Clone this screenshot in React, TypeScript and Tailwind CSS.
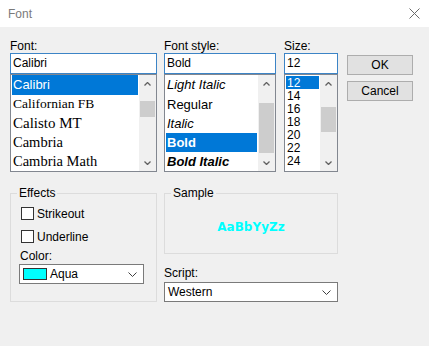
import React from "react";

const Chevron = ({ up }: { up?: boolean }) => (
  <svg width="7" height="4" viewBox="0 0 7 4" className="block">
    <path
      d={up ? "M0.5 3.5L3.5 0.5L6.5 3.5" : "M0.5 0.5L3.5 3.5L6.5 0.5"}
      fill="none"
      stroke="#606060"
      strokeWidth="1.3"
    />
  </svg>
);

const ComboArrow = () => (
  <svg width="9" height="5" viewBox="0 0 9 5" className="block">
    <path d="M0.5 0.5L4.5 4.5L8.5 0.5" fill="none" stroke="#404040" strokeWidth="1" />
  </svg>
);

// thumb classes are written out in full by the caller
const ScrollBar = ({ thumb }: { thumb: string }) => (
  <div className="flex w-[17px] flex-col bg-[#f0f0f0]">
    <div className="flex h-[17px] items-center justify-center">
      <Chevron up />
    </div>
    <div className="flex-1">
      <div className={`mx-[1px] bg-[#cdcdcd] ${thumb}`} />
    </div>
    <div className="flex h-[17px] items-center justify-center">
      <Chevron />
    </div>
  </div>
);

const Field = ({ label, value, width }: { label: string; value: string; width: string }) => (
  <>
    <div className="h-[14px] text-[12px] leading-[14px]">{label}</div>
    <div className={`h-[21px] ${width} border border-[#3c84c6] bg-white pl-[2px] text-[12px] leading-[19px]`}>
      {value}
    </div>
  </>
);

const Checkbox = ({ label }: { label: string }) => (
  <div className="ml-[2px] flex h-[23px] items-center gap-[3px]">
    <div className="h-[13px] w-[13px] border border-[#333333] bg-white" />
    <span className="text-[12px]">{label}</span>
  </div>
);

export default function App() {
  return (
    <div className="h-[346px] w-[429px] overflow-hidden bg-[#f0f0f0] font-['Liberation_Sans',Arial,sans-serif] text-black">
      {/* title bar */}
      <div className="flex h-[27px] items-center justify-between bg-white pl-[8px] pr-[9px]">
        <span className="text-[12px] text-[#7a7a7a]">Font</span>
        <svg width="11" height="11" viewBox="0 0 11 11" className="block">
          <path d="M0.5 0.5L10.5 10.5M10.5 0.5L0.5 10.5" stroke="#6a6a6a" strokeWidth="1" />
        </svg>
      </div>

      <div className="px-[10px] pt-[12px]">
        {/* top row */}
        <div className="flex">
          <div className="flex w-[147px] flex-col">
            <Field label="Font:" value="Calibri" width="w-[147px]" />
            <div className="flex h-[98px] border border-[#828790] bg-white">
              <div className="flex-1 px-[1px]">
                <div className="flex h-[20px] items-center bg-[#0078d7] pl-[1px] text-[13px] text-white">Calibri</div>
                <div className="flex h-[19px] items-center pl-[1px] font-['Liberation_Serif',serif] text-[13.5px]">Californian FB</div>
                <div className="flex h-[19px] items-center pl-[1px] font-['Liberation_Serif',serif] text-[15px]">Calisto MT</div>
                <div className="flex h-[19px] items-center pl-[1px] font-['Liberation_Serif',serif] text-[14.5px]">Cambria</div>
                <div className="flex h-[19px] items-center pl-[1px] font-['Liberation_Serif',serif] text-[14.5px]">Cambria Math</div>
              </div>
              <ScrollBar thumb="mt-[9px] h-[16px]" />
            </div>
          </div>

          <div className="ml-[7px] flex w-[112px] flex-col">
            <Field label="Font style:" value="Bold" width="w-[112px]" />
            <div className="flex h-[98px] border border-[#828790] bg-white">
              <div className="flex-1 px-[1px] text-[13px]">
                <div className="flex h-[20px] items-center pl-[1px] italic">Light Italic</div>
                <div className="flex h-[19px] items-center pl-[1px]">Regular</div>
                <div className="flex h-[19px] items-center pl-[1px] italic">Italic</div>
                <div className="flex h-[19px] items-center bg-[#0078d7] pl-[1px] font-bold text-white">Bold</div>
                <div className="flex h-[19px] items-center pl-[1px] font-bold italic">Bold Italic</div>
              </div>
              <ScrollBar thumb="mt-[11px] h-[50px]" />
            </div>
          </div>

          <div className="ml-[8px] flex w-[54px] flex-col">
            <Field label="Size:" value="12" width="w-[54px]" />
            <div className="flex h-[98px] border border-[#828790] bg-white">
              <div className="flex-1 px-[1px] pt-[1px] text-[12px]">
                <div className="flex h-[13px] items-center bg-[#0078d7] pl-[1px] text-white">12</div>
                <div className="flex h-[13px] items-center pl-[1px]">14</div>
                <div className="flex h-[13px] items-center pl-[1px]">16</div>
                <div className="flex h-[13px] items-center pl-[1px]">18</div>
                <div className="flex h-[13px] items-center pl-[1px]">20</div>
                <div className="flex h-[13px] items-center pl-[1px]">22</div>
                <div className="flex h-[13px] items-center pl-[1px]">24</div>
              </div>
              <ScrollBar thumb="mt-[15px] h-[25px]" />
            </div>
          </div>

          <div className="ml-[9px] flex flex-col gap-[6px] pt-[16px]">
            <button className="h-[20px] w-[66px] border border-[#adadad] bg-[#e1e1e1] text-[12px]">OK</button>
            <button className="h-[20px] w-[66px] border border-[#adadad] bg-[#e1e1e1] text-[12px]">Cancel</button>
          </div>
        </div>

        {/* bottom row */}
        <div className="mt-[13px] flex">
          <fieldset className="h-[117px] w-[147px] border border-[#dcdcdc]">
            <legend className="ml-[6px] px-[2px] text-[12px] leading-[16px]">Effects</legend>
            <div className="flex flex-col pl-[8px] pt-[1px]">
              <Checkbox label="Strikeout" />
              <Checkbox label="Underline" />
              <div className="ml-[1px] h-[16px] text-[12px] leading-[16px]">Color:</div>
              <div className="flex h-[20px] w-[125px] items-center border border-[#7a7a7a] bg-white pl-[3px] pr-[6px]">
                <div className="h-[12px] w-[24px] border border-[#333333] bg-[#00ffff]" />
                <span className="ml-[3px] flex-1 text-[12px]">Aqua</span>
                <ComboArrow />
              </div>
            </div>
          </fieldset>

          <div className="ml-[7px] flex w-[174px] flex-col">
            <fieldset className="flex h-[69px] w-[174px] items-center justify-center border border-[#dcdcdc]">
              <legend className="ml-[6px] px-[2px] text-[12px] leading-[16px]">Sample</legend>
              <div className="flex h-[52px] items-center justify-center font-['DejaVu_Sans',sans-serif] text-[12px] font-bold text-[#00ffff]">
                AaBbYyZz
              </div>
            </fieldset>
            <div className="mt-[11px] h-[16px] text-[12px] leading-[16px]">Script:</div>
            <div className="mt-[1px] flex h-[20px] w-[174px] items-center justify-between border border-[#7a7a7a] bg-white pl-[3px] pr-[6px]">
              <span className="text-[12px]">Western</span>
              <ComboArrow />
            </div>
          </div>
        </div>
      </div>
    </div>
  );
}
